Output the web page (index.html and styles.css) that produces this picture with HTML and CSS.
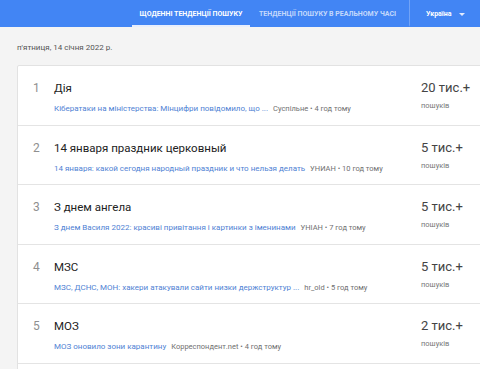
FILE: index.html
```html
<!DOCTYPE html>
<html lang="uk">
  <head>
    <meta charset="UTF-8" />
    <meta name="viewport" content="width=device-width, initial-scale=1.0" />
    <title>Тенденції пошуку</title>
    <link rel="stylesheet" href="styles.css">
  </head>
  <body>
    <header class="topbar">
      <nav class="tabs">
        <a class="tab active" href="#">Щоденні тенденції пошуку</a>
        <a class="tab" href="#">Тенденції пошуку в реальному часі</a>
      </nav>
      <div class="region">
        Україна
        <span class="caret"></span>
      </div>
    </header>

    <main class="content">
      <div class="date">п'ятниця, 14 січня 2022 р.</div>

      <div class="card">
        <div class="row">
          <div class="num">1</div>
          <div class="main">
            <div class="title">Дія</div>
            <div class="sub">
              <a href="#">Кібератаки на міністерства: Мінцифри повідомило, що ...</a><span class="src">Суспільне • 4 год тому</span>
            </div>
          </div>
          <div class="count">
            <div class="value">20 тис.+</div>
            <div class="label">пошуків</div>
          </div>
        </div>

        <div class="row">
          <div class="num">2</div>
          <div class="main">
            <div class="title">14 января праздник церковный</div>
            <div class="sub">
              <a href="#">14 января: какой сегодня народный праздник и что нельзя делать</a><span class="src">УНИАН • 10 год тому</span>
            </div>
          </div>
          <div class="count">
            <div class="value">5 тис.+</div>
            <div class="label">пошуків</div>
          </div>
        </div>

        <div class="row">
          <div class="num">3</div>
          <div class="main">
            <div class="title">З днем ангела</div>
            <div class="sub">
              <a href="#">З днем Василя 2022: красиві привітання і картинки з іменинами</a><span class="src">УНІАН • 7 год тому</span>
            </div>
          </div>
          <div class="count">
            <div class="value">5 тис.+</div>
            <div class="label">пошуків</div>
          </div>
        </div>

        <div class="row">
          <div class="num">4</div>
          <div class="main">
            <div class="title">МЗС</div>
            <div class="sub">
              <a href="#">МЗС, ДСНС, МОН: хакери атакували сайти низки держструктур ...</a><span class="src">hr_old • 5 год тому</span>
            </div>
          </div>
          <div class="count">
            <div class="value">5 тис.+</div>
            <div class="label">пошуків</div>
          </div>
        </div>

        <div class="row">
          <div class="num">5</div>
          <div class="main">
            <div class="title">МОЗ</div>
            <div class="sub">
              <a href="#">МОЗ оновило зони карантину</a><span class="src">Корреспондент.net • 4 год тому</span>
            </div>
          </div>
          <div class="count">
            <div class="value">2 тис.+</div>
            <div class="label">пошуків</div>
          </div>
        </div>

        <!-- next row continues below the fold -->
        <div class="row row-empty"></div>
      </div>
    </main>
  </body>
</html>
```

FILE: styles.css
```css
/* Reset & Global */
* {
  box-sizing: border-box;
  margin: 0;
  padding: 0;
}

body {
  font-family: Roboto, "Noto Sans", sans-serif;
  background-color: #f4f4f4;
  color: #222;
  overflow: hidden;
  height: 369px;
}

a {
  text-decoration: none;
}

/* Top bar */
.topbar {
  height: 27px;
  background-color: #4285f4;
  display: flex;
  align-items: stretch;
  padding-left: 132px;
}

.tabs {
  display: flex;
}

.tab {
  display: flex;
  align-items: center;
  justify-content: center;
  font-size: 7px;
  font-weight: bold;
  text-transform: uppercase;
  color: rgba(255, 255, 255, 0.7);
  border-bottom: 2px solid transparent;
  padding-top: 2px;
}

.tab:first-child {
  width: 118px;
}

.tab:last-child {
  padding: 2px 13px 0 9px;
  border-right: 1px solid rgba(255, 255, 255, 0.25);
}

.tab.active {
  color: #fff;
  border-bottom-color: #e8eefc;
}

.region {
  display: flex;
  align-items: center;
  gap: 8px;
  padding-left: 16px;
  padding-top: 1px;
  font-size: 7px;
  font-weight: bold;
  color: #fff;
}

.caret {
  width: 0;
  height: 0;
  border-left: 3px solid transparent;
  border-right: 3px solid transparent;
  border-top: 3px solid #e3ebfd;
}

/* Content */
.content {
  padding-left: 17px;
}

.date {
  font-size: 8px;
  color: #555;
  padding-top: 16px;
  height: 38px;
}

.card {
  width: 520px;
  background: #fff;
  border: 1px solid #e2e2e2;
  border-radius: 2px;
}

.row {
  display: flex;
  height: 59.5px;
  padding-top: 13px;
  border-bottom: 1px solid #e4e4e4;
}

.row-empty {
  border-bottom: none;
}

.num {
  width: 36px;
  padding-left: 15px;
  font-size: 12px;
  line-height: 18px;
  color: #8f8f8f;
}

.main {
  width: 367px;
}

.title {
  font-size: 11.5px;
  line-height: 18px;
  color: #222;
}

.sub {
  margin-top: 2px;
  line-height: 14px;
  white-space: nowrap;
}

.sub a {
  font-size: 8px;
  color: #4f82d4;
}

.src {
  font-size: 7.5px;
  color: #707070;
  margin-left: 5px;
}

.count .value {
  font-size: 13px;
  line-height: 18px;
  color: #444;
}

.count .label {
  margin-top: 2px;
  font-size: 7.5px;
  line-height: 14px;
  color: #777;
}
```
